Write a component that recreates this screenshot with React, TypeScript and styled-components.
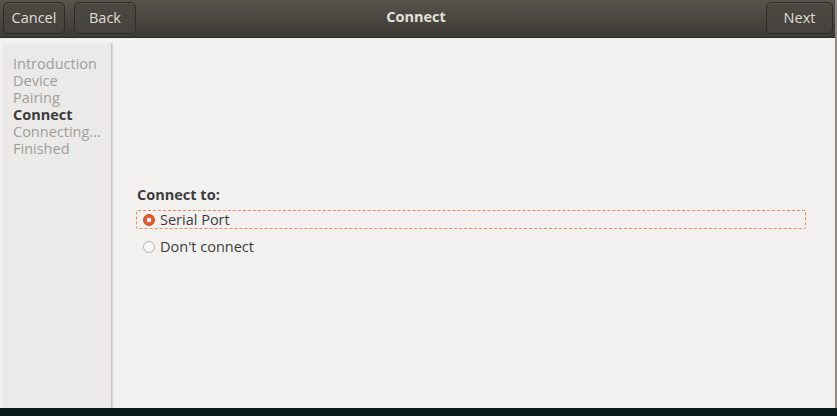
import React from "react";
import styled, { createGlobalStyle } from "styled-components";

const Global = createGlobalStyle`
  html, body { margin: 0; padding: 0; }
  body {
    width: 837px; height: 416px; overflow: hidden;
    background: #0b1a1b;
    font-family: "Open Sans", "DejaVu Sans", sans-serif;
  }
`;

const Window = styled.div`
  width: 837px;
  height: 408px;
  display: flex;
  flex-direction: column;
  background: #f2f1ef;
  box-sizing: border-box;
  border-right: 2px solid #8d8a86;
  overflow: hidden;
`;

const HeaderBar = styled.div`
  height: 38px;
  flex: none;
  display: grid;
  grid-template-columns: 1fr auto 1fr;
  align-items: start;
  padding: 2px 2px 0 3px;
  background: linear-gradient(#58544c, #3c3a35);
  border-bottom: 1px solid #2a2825;
  box-sizing: border-box;
`;

const ButtonGroup = styled.div<{ $end?: boolean }>`
  display: flex;
  gap: 9px;
  justify-content: ${(p) => (p.$end ? "flex-end" : "flex-start")};
`;

const HeadButton = styled.button<{ $w: number }>`
  width: ${(p) => p.$w}px;
  height: 32px;
  border-radius: 5px;
  border: 1px solid #2d2b28;
  background: linear-gradient(#4c4943, #45423d);
  box-shadow: inset 0 1px rgba(255, 255, 255, 0.06);
  color: #e0ddd5;
  font-family: inherit;
  font-size: 14.5px;
  padding: 0 0 2px;
`;

const Title = styled.div`
  text-align: center;
  color: #e4e1db;
  font-weight: 700;
  font-size: 14.5px;
  line-height: 30px;
  padding-right: 4px;
`;

const Body = styled.div`
  flex: 1;
  display: flex;
  padding: 5px 0 0 2px;
`;

const Sidebar = styled.div`
  width: 110px;
  flex: none;
  background: #ebeae8;
  border-right: 1px solid #c7c4bf;
  box-shadow: 1px 0 #dcdad6;
  padding: 12px 0 0 11px;
  box-sizing: border-box;
  display: flex;
  flex-direction: column;
`;

const Step = styled.div<{ $active?: boolean }>`
  font-size: 14.5px;
  line-height: 17px;
  height: 17px;
  color: ${(p) => (p.$active ? "#3c3c3c" : "#a09e9a")};
  font-weight: ${(p) => (p.$active ? 700 : 400)};
  white-space: nowrap;
`;

const Main = styled.div`
  flex: 1;
  display: flex;
  flex-direction: column;
  padding: 143px 29px 0 24px;
`;

const Label = styled.div`
  font-size: 14.5px;
  font-weight: 700;
  color: #3c3c3c;
  line-height: 17px;
  margin-left: 1px;
  margin-bottom: 7px;
`;

const Option = styled.div<{ $focused?: boolean }>`
  height: 19px;
  display: flex;
  align-items: center;
  gap: 5px;
  padding-left: 6px;
  box-sizing: border-box;
  border: 1px dashed ${(p) => (p.$focused ? "#ee8a5c" : "transparent")};
  border-radius: 2px;
  font-size: 14.5px;
  color: #3c3c3c;
  margin-bottom: 8px;
`;

const Radio = styled.span<{ $checked?: boolean }>`
  width: 12px;
  height: 12px;
  border-radius: 50%;
  box-sizing: border-box;
  flex: none;
  ${(p) =>
    p.$checked
      ? `background: radial-gradient(circle, #fff 0 2px, #e35d2e 2.5px); border: 1px solid #c24a1d;`
      : `background: linear-gradient(#fff, #f3f2f0); border: 1px solid #b6b3ae;`}
`;

export default function App() {
  return (
    <>
      <Global />
      <Window>
        <HeaderBar>
          <ButtonGroup>
            <HeadButton $w={62}>Cancel</HeadButton>
            <HeadButton $w={62}>Back</HeadButton>
          </ButtonGroup>
          <Title>Connect</Title>
          <ButtonGroup $end>
            <HeadButton $w={67}>Next</HeadButton>
          </ButtonGroup>
        </HeaderBar>
        <Body>
          <Sidebar>
            <Step>Introduction</Step>
            <Step>Device</Step>
            <Step>Pairing</Step>
            <Step $active>Connect</Step>
            <Step>Connecting...</Step>
            <Step>Finished</Step>
          </Sidebar>
          <Main>
            <Label>Connect to:</Label>
            <Option $focused>
              <Radio $checked />
              Serial Port
            </Option>
            <Option>
              <Radio />
              Don't connect
            </Option>
          </Main>
        </Body>
      </Window>
    </>
  );
}
